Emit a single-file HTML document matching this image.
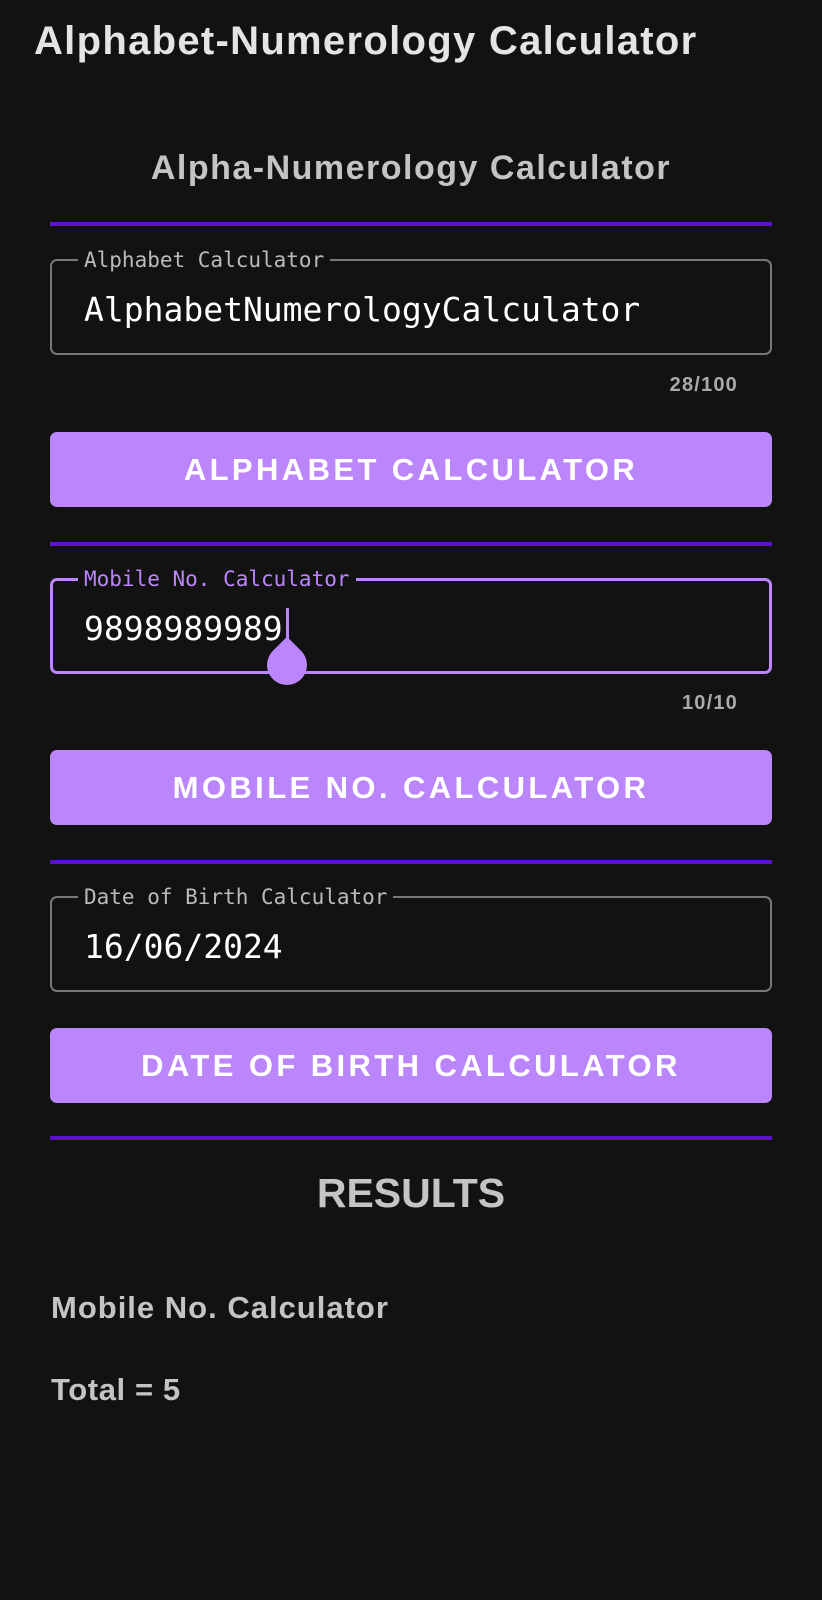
<!DOCTYPE html>
<html><head><meta charset="utf-8"><style>
body{margin:0;width:822px;height:1600px;background:#121212;position:relative;overflow:hidden;font-family:"Liberation Sans",sans-serif}
.a{position:absolute;white-space:nowrap}
.line{position:absolute;left:50px;width:722px;height:4px;background:#5c10d0}
.box{position:absolute;left:50px;width:718px;height:92px;border:2px solid #777;border-radius:7px}
.lbl{position:absolute;left:26px;top:-13px;background:#121212;padding:0 6px;font-family:"DejaVu Sans Mono",monospace;font-size:21px;color:#bbb;line-height:24px}
.val{position:absolute;left:32px;top:30px;font-family:"DejaVu Sans Mono",monospace;font-size:33px;color:#fff;line-height:38px}
.btn{position:absolute;left:50px;width:722px;height:75px;background:#bb86fc;border-radius:7px;color:#fff;font-weight:bold;font-size:31px;letter-spacing:3.4px;text-align:center;line-height:75px}
.cnt{position:absolute;font-weight:bold;font-size:20px;letter-spacing:1.2px;color:#aaa}
.res{font-weight:bold;color:#c4c4c4}
</style></head><body>
<div class="a" style="left:34px;top:19px;font-size:40px;letter-spacing:1.3px;font-weight:bold;color:#e4e4e4">Alphabet-Numerology Calculator</div>
<div class="a res" style="left:0;width:822px;text-align:center;top:149px;font-size:34px;letter-spacing:1.5px">Alpha-Numerology Calculator</div>
<div class="line" style="top:222px"></div>
<div class="box" style="top:259px"><div class="lbl">Alphabet Calculator</div><div class="val">AlphabetNumerologyCalculator</div></div>
<div class="cnt" style="right:84px;top:374px">28/100</div>
<div class="btn" style="top:432px">ALPHABET CALCULATOR</div>
<div class="line" style="top:542px"></div>
<div class="box" style="top:578px;border:3px solid #bb86fc;width:716px;height:90px"><div class="lbl" style="color:#bb86fc;top:-14px;left:25px">Mobile No. Calculator</div><div class="val" style="left:31px;top:29px">9898989989</div>
<div style="position:absolute;left:233px;top:27px;width:3px;height:46px;background:#bb86fc"></div>
<div style="position:absolute;left:214px;top:64px;width:40px;height:40px;background:#bb86fc;border-radius:50% 0 50% 50%;transform:rotate(-45deg)"></div></div>
<div class="cnt" style="right:84px;top:692px">10/10</div>
<div class="btn" style="top:750px">MOBILE NO. CALCULATOR</div>
<div class="line" style="top:860px"></div>
<div class="box" style="top:896px"><div class="lbl">Date of Birth Calculator</div><div class="val">16/06/2024</div></div>
<div class="btn" style="top:1028px">DATE OF BIRTH CALCULATOR</div>
<div class="line" style="top:1136px"></div>
<div class="a res" style="left:0;width:822px;text-align:center;top:1170px;font-size:41px">RESULTS</div>
<div class="a res" style="left:51px;top:1290px;font-size:31px;letter-spacing:1px">Mobile No. Calculator</div>
<div class="a res" style="left:51px;top:1372px;font-size:31px;letter-spacing:0.6px">Total = 5</div>
</body></html>
